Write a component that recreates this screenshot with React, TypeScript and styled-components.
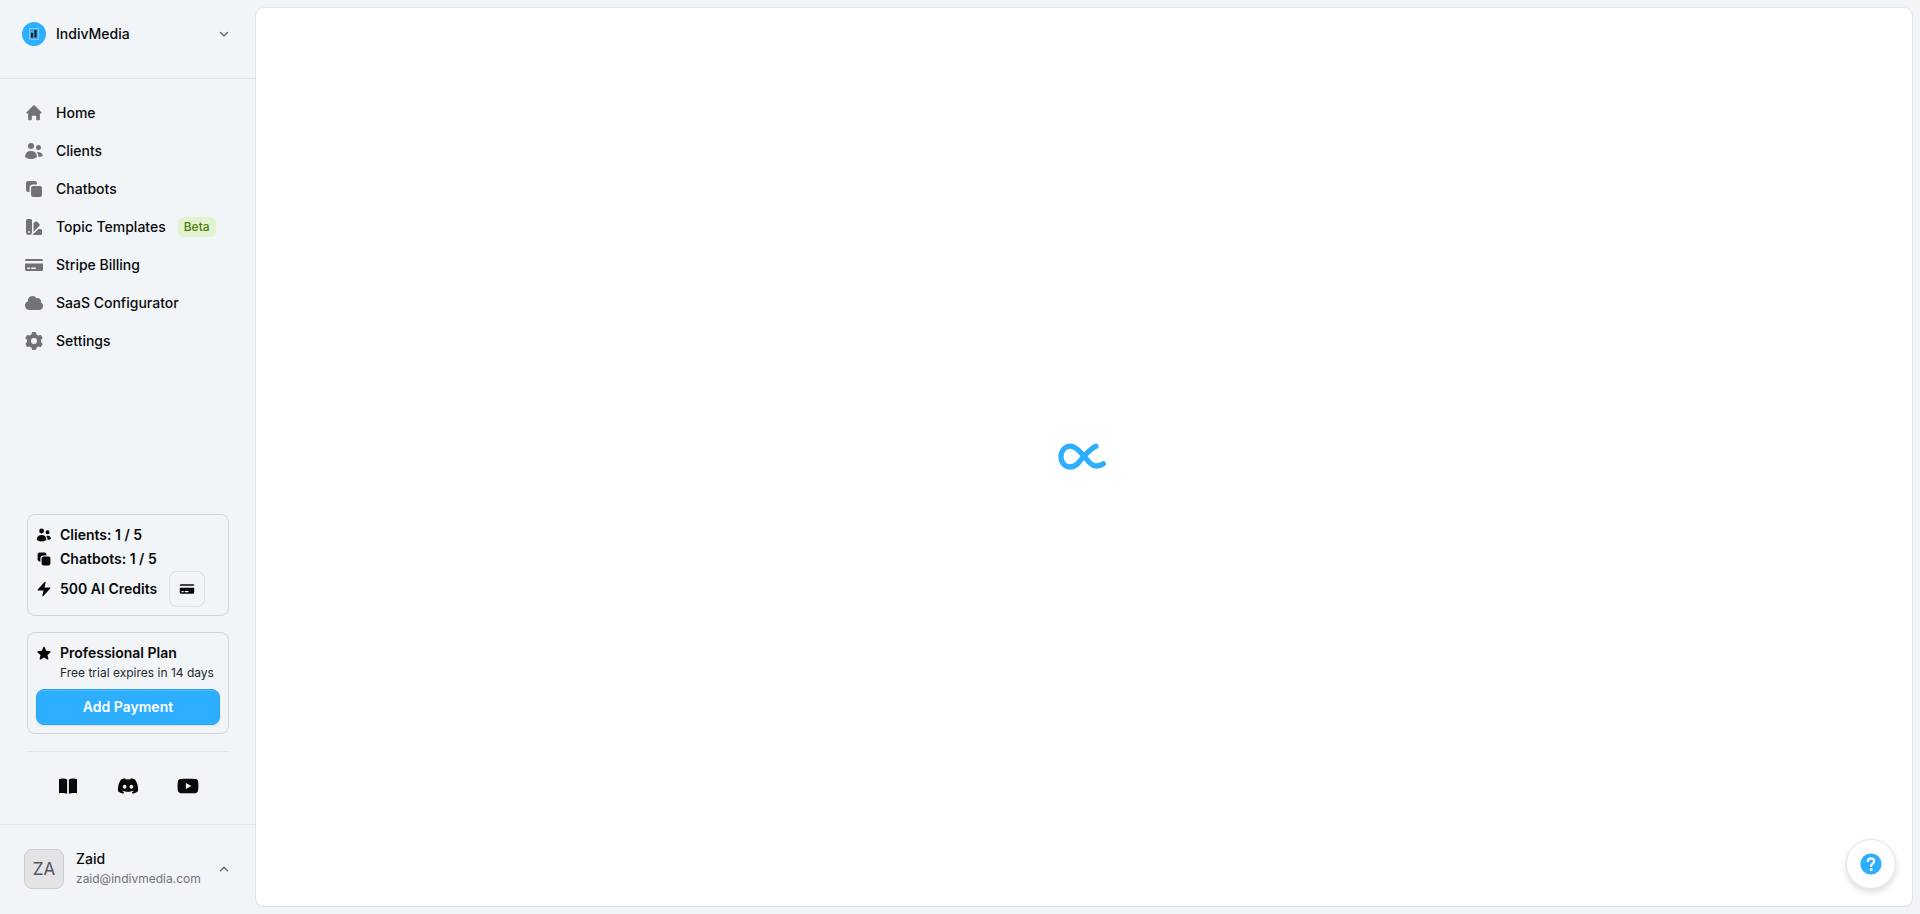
import React from 'react';
import styled, { createGlobalStyle } from 'styled-components';
import {
  HiMiniUsers, HiMiniSquare2Stack, HiMiniSwatch, HiMiniCreditCard, HiMiniCloud,
  HiMiniCog6Tooth, HiMiniBolt, HiMiniStar,
} from 'react-icons/hi2';
import { FaDiscord, FaYoutube } from 'react-icons/fa';

const Global = createGlobalStyle`
  *, *::before, *::after { box-sizing: border-box; }
  body {
    margin: 0;
    background: #f1f5f8;
    color: #09090b;
    font-family: Inter, "Liberation Sans", sans-serif;
    font-size: 14px;
    line-height: 20px;
  }
  button { font: inherit; color: inherit; cursor: pointer; }
  a { color: inherit; text-decoration: none; }
  svg { display: block; flex: none; }
`;

const Shell = styled.div`
  display: flex;
  min-height: 100vh;
`;

const Sidebar = styled.aside`
  display: flex;
  flex-direction: column;
  flex: none;
  width: 256px;
`;

const SidebarHeader = styled.header`
  padding: 16px 16px 26px;
  border-bottom: 1px solid #e2e6ea;
`;

const MenuButton = styled.button<{ $tall?: boolean }>`
  display: flex;
  align-items: center;
  gap: ${(p) => (p.$tall ? 12 : 10)}px;
  width: 100%;
  padding: ${(p) => (p.$tall ? '8px' : '0 8px 0 6px')};
  min-height: 36px;
  border: 0;
  background: none;
  text-align: left;
  font-weight: 500;
`;

const Grow = styled.span`
  flex: 1;
`;

const Nav = styled.nav`
  flex: 1;
  padding: 16px;
`;

const NavList = styled.ul`
  display: flex;
  flex-direction: column;
  gap: 2px;
  margin: 0;
  padding: 0;
  list-style: none;
`;

const NavLink = styled.a`
  display: flex;
  align-items: center;
  gap: 12px;
  padding: 8px;
  font-weight: 500;
  svg { color: #71717a; }
`;

const Badge = styled.span`
  padding: 0 6px;
  border-radius: 6px;
  background: #e2f3cf;
  color: #4d7c0f;
  font-size: 12px;
`;

const Plans = styled.section`
  display: flex;
  flex-direction: column;
  gap: 16px;
  margin: 0 27px;
  padding-bottom: 17px;
  border-bottom: 1px solid #e2e6ea;
`;

const Card = styled.div`
  display: flex;
  flex-direction: column;
  padding: 8px;
  border: 1px solid #d4d4d8;
  border-radius: 8px;
`;

const Stat = styled.div`
  display: flex;
  align-items: center;
  gap: 8px;
  min-height: 24px;
  font-weight: 600;
`;

const IconButton = styled.button`
  display: grid;
  place-items: center;
  width: 36px;
  height: 36px;
  margin-left: 4px;
  padding: 0;
  border: 1px solid #dcdfe3;
  border-radius: 8px;
  background: none;
`;

const Note = styled.p`
  margin: 0 0 8px 24px;
  font-size: 12px;
  line-height: 16px;
  color: #27272a;
`;

const PayButton = styled.button`
  height: 36px;
  border: 1px solid #2ba4f2;
  border-radius: 8px;
  background: #2eaeff;
  color: #fff;
  font-weight: 600;
  box-shadow: inset 0 1px rgba(255, 255, 255, 0.15), 0 1px 2px rgba(0, 0, 0, 0.1);
`;

const Socials = styled.div`
  display: flex;
  justify-content: center;
  gap: 38px;
  padding: 23px 0 27px;
`;

const SocialLink = styled.a`
  display: grid;
  place-items: center;
  width: 22px;
  height: 22px;
`;

const SidebarFooter = styled.footer`
  padding: 16px 16px 17px;
  border-top: 1px solid #e2e6ea;
`;

const Avatar = styled.span`
  display: grid;
  place-items: center;
  width: 40px;
  height: 40px;
  border: 1px solid #cbcbd0;
  border-radius: 8px;
  background: #e4e4e7;
  color: #52525b;
  font-size: 17px;
  font-weight: 400;
`;

const Person = styled.span`
  display: flex;
  flex: 1;
  flex-direction: column;
`;

const Email = styled.span`
  color: #71717a;
  font-size: 12px;
  font-weight: 400;
`;

const Main = styled.main`
  display: grid;
  place-items: center;
  flex: 1;
  margin: 8px 8px 8px 0;
  border-radius: 8px;
  background: #fff;
  box-shadow: 0 0 0 1px rgba(9, 9, 11, 0.05), 0 1px 2px rgba(0, 0, 0, 0.05);
`;

const HelpButton = styled.button`
  position: fixed;
  right: 24px;
  bottom: 25px;
  display: grid;
  place-items: center;
  width: 50px;
  height: 50px;
  padding: 0;
  border: 1px solid #e4e4e7;
  border-radius: 50%;
  background: #fff;
  color: #2eaeff;
  box-shadow: 0 3px 6px rgba(0, 0, 0, 0.14);
`;

const HomeIcon = () => (
  <svg width="20" height="20" viewBox="0 0 20 20" fill="currentColor" aria-hidden="true">
    <path d="M9.300 2.600a1 1 0 0 1 1.400 0l6.700 6.600c.6.600.2 1.400-.6 1.400h-.9v5.400a1.300 1.300 0 0 1-1.300 1.300h-1.400a1 1 0 0 1-1-1v-2.800a.7.7 0 0 0-.7-.7h-3a.7.7 0 0 0-.7.7v2.800a1 1 0 0 1-1 1H5.400a1.300 1.300 0 0 1-1.300-1.300v-5.400h-.9c-.8 0-1.200-.8-.6-1.400z" />
  </svg>
);

const NAV = [
  { label: 'Home', icon: <HomeIcon /> },
  { label: 'Clients', icon: <HiMiniUsers size={20} /> },
  { label: 'Chatbots', icon: <HiMiniSquare2Stack size={20} /> },
  { label: 'Topic Templates', icon: <HiMiniSwatch size={20} />, badge: 'Beta' },
  { label: 'Stripe Billing', icon: <HiMiniCreditCard size={20} /> },
  { label: 'SaaS Configurator', icon: <HiMiniCloud size={20} /> },
  { label: 'Settings', icon: <HiMiniCog6Tooth size={20} /> },
];

const BrandLogo = () => (
  <svg width="24" height="24" viewBox="0 0 24 24" aria-hidden="true">
    <circle cx="12" cy="12" r="12" fill="#2eaeff" />
    <rect x="7.500" y="6.500" width="9" height="11" fill="#41a8ea" stroke="#7cc9fa" />
    <path d="M9 10.700h2.200v4.800H9zM12.400 8h2.200v7.500h-2.200z" fill="#0b2239" />
  </svg>
);

const Chevron = ({ up }: { up?: boolean }) => (
  <svg width="16" height="16" viewBox="0 0 16 16" fill="none" stroke="#71717a" strokeWidth="1.5" strokeLinecap="round" strokeLinejoin="round" aria-hidden="true">
    <path d={up ? 'M4.500 9.700L8 6.200l3.500 3.500' : 'M4.500 6.500L8 10l3.500-3.500'} />
  </svg>
);

const BookIcon = () => (
  <svg width="20" height="20" viewBox="0 0 20 20" fill="currentColor" aria-hidden="true">
    <path d="M1 3.200C3.500 2.400 7 2.400 9.100 3.400V17.800C7 16.900 3.500 16.700 1 17.200zM19 3.200C16.500 2.400 13 2.400 10.900 3.400V17.800C13 16.900 16.500 16.700 19 17.200z" />
  </svg>
);

const HelpIcon = () => (
  <svg width="22" height="22" viewBox="0 0 22 22" fill="none" aria-hidden="true">
    <circle cx="11" cy="11" r="10.600" fill="currentColor" />
    <path d="M8 8.200C8 6.400 9.300 5.400 11 5.400s3.100 1.100 3.100 2.800c0 2.400-2.900 2.500-2.900 4.900" stroke="#fff" strokeWidth="2.200" strokeLinecap="round" />
    <circle cx="11.200" cy="16.600" r="1.500" fill="#fff" />
  </svg>
);

const Loader = () => (
  <svg width="56" height="32" viewBox="0 0 56 32" fill="none" stroke="#2eaeff" strokeWidth="5.300" strokeLinecap="round" role="img" aria-label="Loading">
    <path d="M40 5.200C35.500 7 32 11 28 15.200S21 26 14.700 26C8.500 26 5 21.200 5 15.700S8.500 5.200 14.700 5.200C20 5.200 24 11 28 15.200S37 29.500 47.300 22.800" />
  </svg>
);

export default function App() {
  return (
    <>
      <Global />
      <Shell>
        <Sidebar>
          <SidebarHeader>
            <MenuButton type="button">
              <BrandLogo />
              <Grow>IndivMedia</Grow>
              <Chevron />
            </MenuButton>
          </SidebarHeader>
          <Nav>
            <NavList>
              {NAV.map(({ label, icon, badge }) => (
                <li key={label}>
                  <NavLink href="#">
                    {icon}
                    {label}
                    {badge && <Badge>{badge}</Badge>}
                  </NavLink>
                </li>
              ))}
            </NavList>
          </Nav>
          <Plans>
            <Card>
              <Stat><HiMiniUsers size={16} />Clients: 1 / 5</Stat>
              <Stat><HiMiniSquare2Stack size={16} />Chatbots: 1 / 5</Stat>
              <Stat>
                <HiMiniBolt size={16} />500 AI Credits
                <IconButton type="button" aria-label="Buy credits"><HiMiniCreditCard size={16} /></IconButton>
              </Stat>
            </Card>
            <Card>
              <Stat><HiMiniStar size={16} />Professional Plan</Stat>
              <Note>Free trial expires in 14 days</Note>
              <PayButton type="button">Add Payment</PayButton>
            </Card>
          </Plans>
          <Socials>
            <SocialLink href="#" aria-label="Documentation"><BookIcon /></SocialLink>
            <SocialLink href="#" aria-label="Discord"><FaDiscord size={22} /></SocialLink>
            <SocialLink href="#" aria-label="YouTube"><FaYoutube size={22} /></SocialLink>
          </Socials>
          <SidebarFooter>
            <MenuButton type="button" $tall>
              <Avatar>ZA</Avatar>
              <Person>
                <span>Zaid</span>
                <Email>zaid@indivmedia.com</Email>
              </Person>
              <Chevron up />
            </MenuButton>
          </SidebarFooter>
        </Sidebar>
        <Main><Loader /></Main>
      </Shell>
      <HelpButton type="button" aria-label="Help"><HelpIcon /></HelpButton>
    </>
  );
}
